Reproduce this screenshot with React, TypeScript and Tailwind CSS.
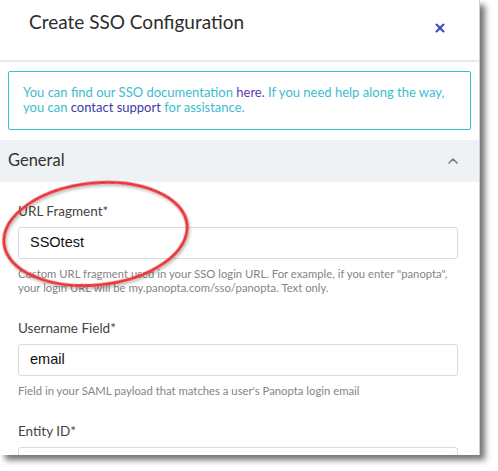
import React from 'react';
import { ChevronUp, X } from 'lucide-react';

const fields = [
  {
    label: 'URL Fragment*',
    value: 'SSOtest',
    help: (
      <>
        Custom URL fragment used in your SSO login URL. For example, if you enter "panopta",
        <br />
        your login URL will be my.panopta.com/sso/panopta. Text only.
      </>
    ),
  },
  {
    label: 'Username Field*',
    value: 'email',
    help: <>Field in your SAML payload that matches a user's Panopta login email</>,
  },
  { label: 'Entity ID*', value: '', help: null },
];

export default function App() {
  return (
    <div className="relative w-[498px] h-[471px] bg-white overflow-hidden font-['Lato','Noto_Sans',sans-serif]">
      {/* Modal panel */}
      <div className="w-[480px] h-[455px] bg-white overflow-hidden flex flex-col border-r border-[#cfcfcf] shadow-[5px_5px_6px_rgba(0,0,0,0.55)]">
        {/* Header */}
        <div className="h-[62px] shrink-0 flex items-start justify-between pl-[29px] pr-[32px] border-b-2 border-[#e8e8ee]">
          <h1 className="pt-[8px] text-[19px] leading-[28px] text-[#2d2d2d] font-normal">
            Create SSO Configuration
          </h1>
          <button className="mt-[21px] text-[#3b4cb8]">
            <X className="w-[14px] h-[14px]" strokeWidth={3.5} />
          </button>
        </div>

        {/* Info box */}
        <div className="mx-[8px] mt-[9px] border border-[#2bc3d6] rounded-[2px] pl-[14px] pr-[6px] pt-[13px] pb-[14px] text-[13px] leading-[15px] text-[#3dbccf] whitespace-nowrap">
          You can find our SSO documentation{' '}
          <a className="text-[#5a3fb3]">here.</a> If you need help along the way,
          <br />
          you can <a className="text-[#3b3aa8]">contact support</a> for assistance.
        </div>

        {/* General section */}
        <div className="mt-[10px] h-[42px] shrink-0 bg-[#eff2f5] flex items-center justify-between pl-[8px] pr-[18px]">
          <span className="text-[16.5px] text-[#333] pb-[2px]">General</span>
          <ChevronUp className="w-[16px] h-[16px] text-[#6d8296]" strokeWidth={2.5} />
        </div>

        <div className="px-[18px] pt-[19px] pr-[21px] flex flex-col gap-[23px]">
          {fields.map((f) => (
            <div key={f.label} className="flex flex-col">
              <label className="text-[13.5px] leading-[20px] text-[#444] mb-[6px]">{f.label}</label>
              <div className="h-[32px] shrink-0 border border-[#d9d9de] rounded-[3px] flex items-center px-[11px] text-[14.5px] text-[#111] font-['Liberation_Sans','Arial',sans-serif]">
                {f.value}
              </div>
              {f.help && (
                <p className="mt-[8px] text-[11.3px] leading-[14px] text-[#858585] whitespace-nowrap">
                  {f.help}
                </p>
              )}
            </div>
          ))}
        </div>
      </div>

      {/* Red annotation ellipse */}
      <svg
        className="absolute left-0 top-0 pointer-events-none"
        width="498"
        height="471"
        viewBox="0 0 498 471"
      >
        <defs>
          <filter id="sh" x="-20%" y="-20%" width="140%" height="140%">
            <feDropShadow dx="1" dy="2" stdDeviation="1.5" floodColor="#000" floodOpacity="0.3" />
          </filter>
        </defs>
        <ellipse
          cx="95.5"
          cy="234"
          rx="92"
          ry="51"
          transform="rotate(-6 95.5 234)"
          fill="none"
          stroke="#e8373c"
          strokeWidth="3"
          filter="url(#sh)"
        />
      </svg>
    </div>
  );
}
